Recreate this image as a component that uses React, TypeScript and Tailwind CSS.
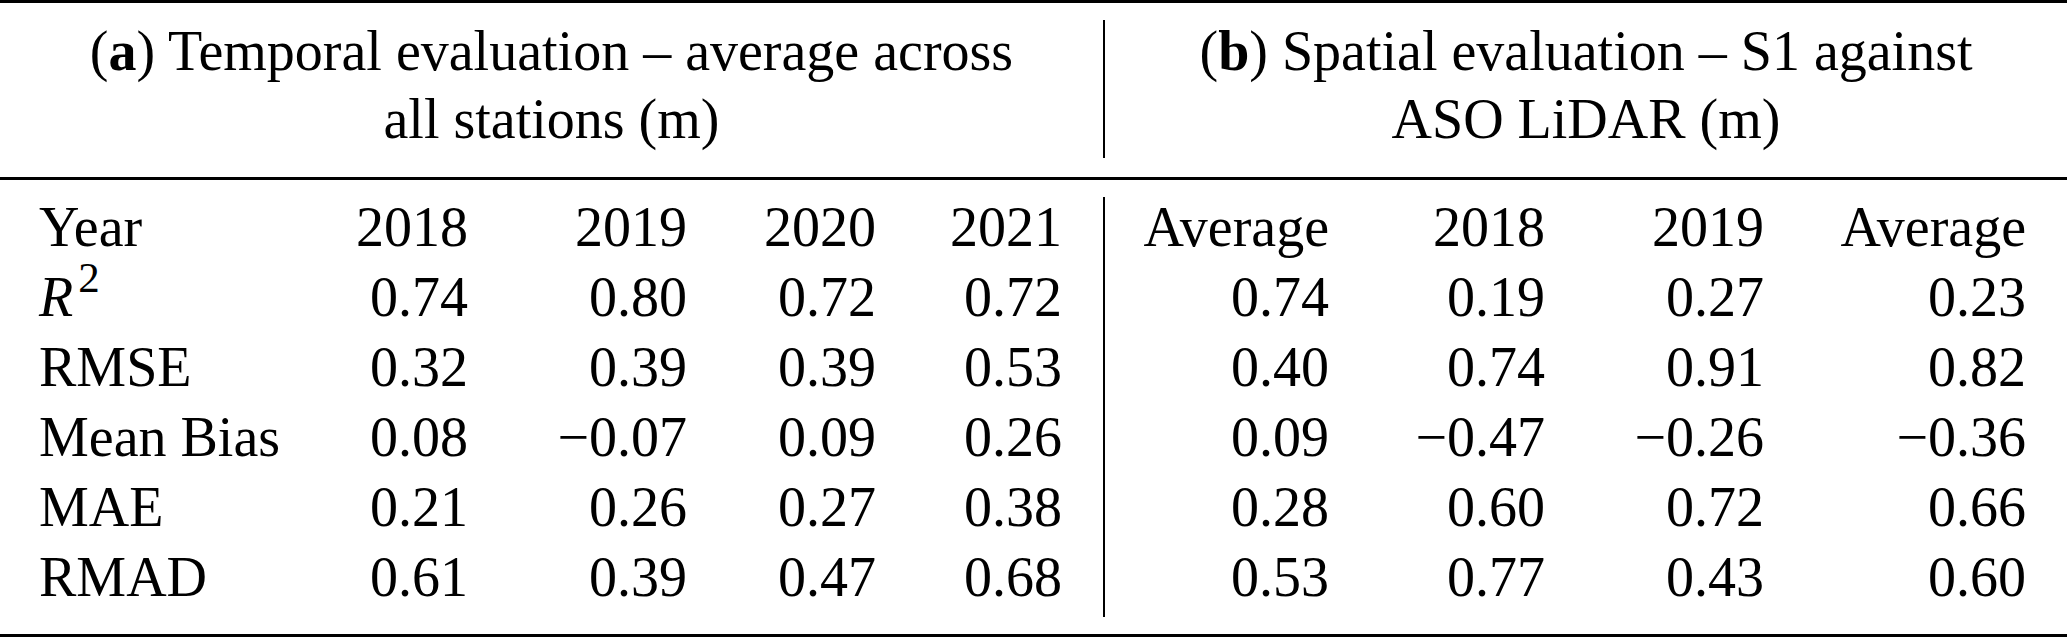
import React from 'react';

type Row = {
    label: React.ReactNode;
    left: string[];
    right: string[];
};

const rows: Row[] = [
    { label: 'Year', left: ['2018', '2019', '2020', '2021'], right: ['Average', '2018', '2019', 'Average'] },
    {
        label: (
            <>
                <i>R</i>
                <span className="text-[43px] leading-[0] align-[24px] pl-[5px]">2</span>
            </>
        ),
        left: ['0.74', '0.80', '0.72', '0.72'],
        right: ['0.74', '0.19', '0.27', '0.23'],
    },
    { label: 'RMSE', left: ['0.32', '0.39', '0.39', '0.53'], right: ['0.40', '0.74', '0.91', '0.82'] },
    { label: 'Mean Bias', left: ['0.08', '\u22120.07', '0.09', '0.26'], right: ['0.09', '\u22120.47', '\u22120.26', '\u22120.36'] },
    { label: 'MAE', left: ['0.21', '0.26', '0.27', '0.38'], right: ['0.28', '0.60', '0.72', '0.66'] },
    { label: 'RMAD', left: ['0.61', '0.39', '0.47', '0.68'], right: ['0.53', '0.77', '0.43', '0.60'] },
];

const TableRow: React.FC<{ row: Row }> = ({ row }) => (
    <div className="grid grid-cols-[248px_220px_219px_189px_227px_226px_216px_219px_262px] leading-[60px] h-[70px]">
        <div className="pl-[39px] whitespace-nowrap">{row.label}</div>
        <div className="text-right">{row.left[0]}</div>
        <div className="text-right">{row.left[1]}</div>
        <div className="text-right">{row.left[2]}</div>
        <div className="text-right pr-[41px]">{row.left[3]}</div>
        <div className="text-right border-l-2 border-black">{row.right[0]}</div>
        <div className="text-right">{row.right[1]}</div>
        <div className="text-right">{row.right[2]}</div>
        <div className="text-right">{row.right[3]}</div>
    </div>
);

export default function App() {
    return (
        <div className="w-[2067px] h-[638px] bg-white text-black font-['Liberation_Serif','Times_New_Roman',serif] text-[56px]">
            <div className="border-t-[3px] border-b-[3px] border-black flex pt-[14px] pb-[19px]">
                <div className="w-[1103px] text-center leading-[68px]">
                    <div>
                        (<b>a</b>) Temporal evaluation – average across
                    </div>
                    <div>all stations (m)</div>
                </div>
                <div className="w-[2px] h-[138px] mt-[3px] bg-black" />
                <div className="flex-1 text-center leading-[68px]">
                    <div>
                        (<b>b</b>) Spatial evaluation – S1 against
                    </div>
                    <div>ASO LiDAR (m)</div>
                </div>
            </div>
            <div className="border-b-[3px] border-black py-[17px] pr-[41px]">
                {rows.map((row, i) => (
                    <TableRow key={i} row={row} />
                ))}
            </div>
        </div>
    );
}
